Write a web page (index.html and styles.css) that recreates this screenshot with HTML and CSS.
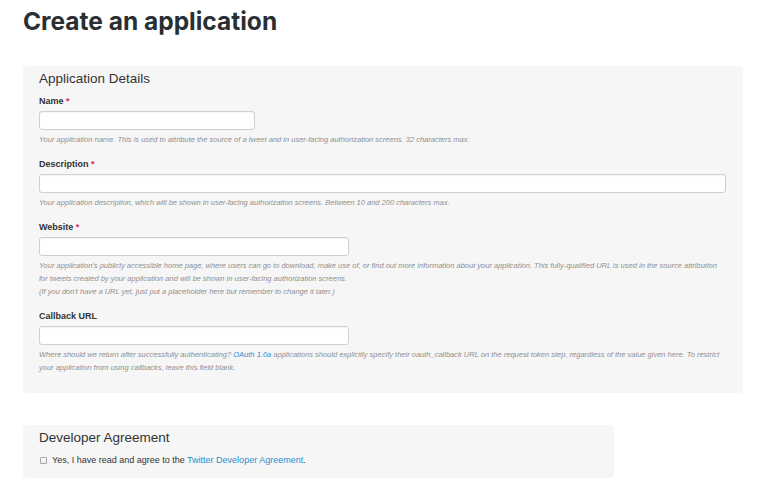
FILE: index.html
```html
<!DOCTYPE html>
<html lang="en">
<head>
<meta charset="utf-8">
<title>Create an application</title>
<link rel="stylesheet" href="styles.css">
</head>
<body>
<main class="page">
  <h1 class="page-title">Create an application</h1>

  <section class="panel panel-details">
    <h2 class="panel-title">Application Details</h2>

    <div class="field">
      <label class="field-label">Name <span class="req">*</span></label>
      <input class="field-input input-short" type="text">
      <p class="field-help">Your application name. This is used to attribute the source of a tweet and in user-facing authorization screens. 32 characters max.</p>
    </div>

    <div class="field">
      <label class="field-label">Description <span class="req">*</span></label>
      <input class="field-input input-full" type="text">
      <p class="field-help">Your application description, which will be shown in user-facing authorization screens. Between 10 and 200 characters max.</p>
    </div>

    <div class="field">
      <label class="field-label">Website <span class="req">*</span></label>
      <input class="field-input input-medium" type="text">
      <p class="field-help">Your application's publicly accessible home page, where users can go to download, make use of, or find out more information about your application. This fully-qualified URL is used in the source attribution for tweets created by your application and will be shown in user-facing authorization screens.<br>(If you don't have a URL yet, just put a placeholder here but remember to change it later.)</p>
    </div>

    <div class="field">
      <label class="field-label">Callback URL</label>
      <input class="field-input input-medium" type="text">
      <p class="field-help">Where should we return after successfully authenticating? <a class="link" href="#">OAuth 1.0a</a> applications should explicitly specify their oauth_callback URL on the request token step, regardless of the value given here. To restrict your application from using callbacks, leave this field blank.</p>
    </div>
  </section>

  <section class="panel panel-agreement">
    <h2 class="panel-title">Developer Agreement</h2>
    <label class="agree">
      <span class="checkbox"></span>
      <span class="agree-text">Yes, I have read and agree to the <a class="link" href="#">Twitter Developer Agreement</a>.</span>
    </label>
  </section>
</main>
</body>
</html>
```
FILE: styles.css
```css
* { box-sizing: border-box; }

html, body {
  margin: 0;
  padding: 0;
  background: #ffffff;
}

body {
  font-family: "Liberation Sans", Arial, sans-serif;
  color: #333333;
}

.page {
  padding: 0 0 0 23px;
}

.page-title {
  margin: 0;
  padding-top: 5px;
  font-family: "Inter", "Liberation Sans", sans-serif;
  font-weight: 700;
  font-size: 24.5px;
  line-height: 32px;
  color: #292f33;
}

.panel {
  background: #f6f6f6;
  border-radius: 4px;
}

.panel-details {
  margin-top: 29px;
  width: 720px;
  padding: 4px 17px 19px 16px;
}

.panel-agreement {
  margin-top: 32px;
  width: 591px;
  padding: 4px 16px 11px 16px;
}

.panel-title {
  margin: 0;
  font-size: 13.5px;
  line-height: 17px;
  font-weight: 400;
  color: #333333;
}

.panel-details .panel-title {
  margin-bottom: 8px;
}

.field {
  display: flex;
  flex-direction: column;
  align-items: flex-start;
  margin-bottom: 12px;
}

.field:last-child {
  margin-bottom: 0;
}

.field-label {
  font-size: 9px;
  line-height: 13px;
  font-weight: 700;
  color: #333333;
  margin-bottom: 3px;
}

.req {
  color: #e0245e;
  font-weight: 700;
}

.field-input {
  height: 19px;
  margin: 0;
  padding: 0 4px;
  border: 1px solid #cfcfcf;
  border-radius: 3px;
  background: #ffffff;
  box-shadow: inset 0 1px 1px rgba(0,0,0,0.04);
  font-family: inherit;
  font-size: 10px;
}

.input-short { width: 216px; }
.input-medium { width: 310px; }
.input-full { width: 100%; }

.field-help {
  margin: 3px 0 0 0;
  font-size: 7.5px;
  line-height: 13px;
  font-style: italic;
  color: #8f8f8f;
}

.link {
  color: #2b8ecf;
  text-decoration: none;
}

.agree {
  display: flex;
  align-items: center;
  margin-top: 7px;
  font-size: 9px;
  line-height: 14px;
  color: #333333;
}

.checkbox {
  display: inline-block;
  width: 7px;
  height: 7px;
  border: 1px solid #a8a8a8;
  border-radius: 1px;
  background: linear-gradient(#ffffff, #ececec);
  margin: 0 5px 0 1px;
}
```
